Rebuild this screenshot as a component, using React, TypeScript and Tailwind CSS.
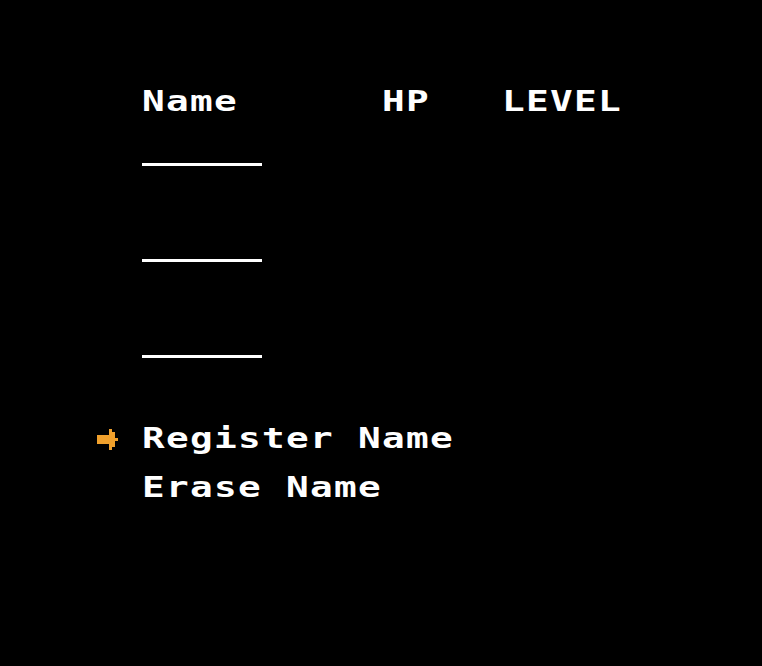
const font = { fontFamily: '"DejaVu Sans Mono", "Liberation Mono", monospace' };

function Arrow() {
  // 7x7 pixel pointer, 3px per block
  const rows = ["....#..", "....##.", "######.", "#######", "######.", "....##.", "....#.."];
  return (
    <svg width="21" height="21" viewBox="0 0 7 7" shapeRendering="crispEdges">
      {rows.map((row, y) =>
        row.split("").map((c, x) =>
          c === "#" ? <rect key={`${x}-${y}`} x={x} y={y} width="1" height="1" fill="#f0a02c" /> : null
        )
      )}
    </svg>
  );
}

function Label({ children }: { children: string }) {
  return (
    <span
      className="inline-block origin-left scale-x-[1.3] whitespace-pre text-[29px] leading-none font-bold tracking-[1px] text-white"
      style={font}
    >
      {children}
    </span>
  );
}

function Slot() {
  return (
    <div className="h-[96px] pt-[76px]">
      <div className="h-[3px] w-[120px] bg-white" />
    </div>
  );
}

export default function App() {
  return (
    <div className="w-[762px] h-[666px] bg-black overflow-hidden">
      <div className="pl-[142px] pt-[87px] h-[116px]">
        <Label>{"Name      HP   LEVEL"}</Label>
      </div>
      <div className="pl-[142px] -mt-[29px]">
        <Slot />
        <Slot />
        <Slot />
      </div>
      <div className="pl-[97px] pt-[49px] flex flex-col gap-[19px]">
        <div className="flex items-center">
          <Arrow />
          <div className="ml-[24px]">
            <Label>Register Name</Label>
          </div>
        </div>
        <div className="pl-[45px]">
          <Label>Erase Name</Label>
        </div>
      </div>
    </div>
  );
}
